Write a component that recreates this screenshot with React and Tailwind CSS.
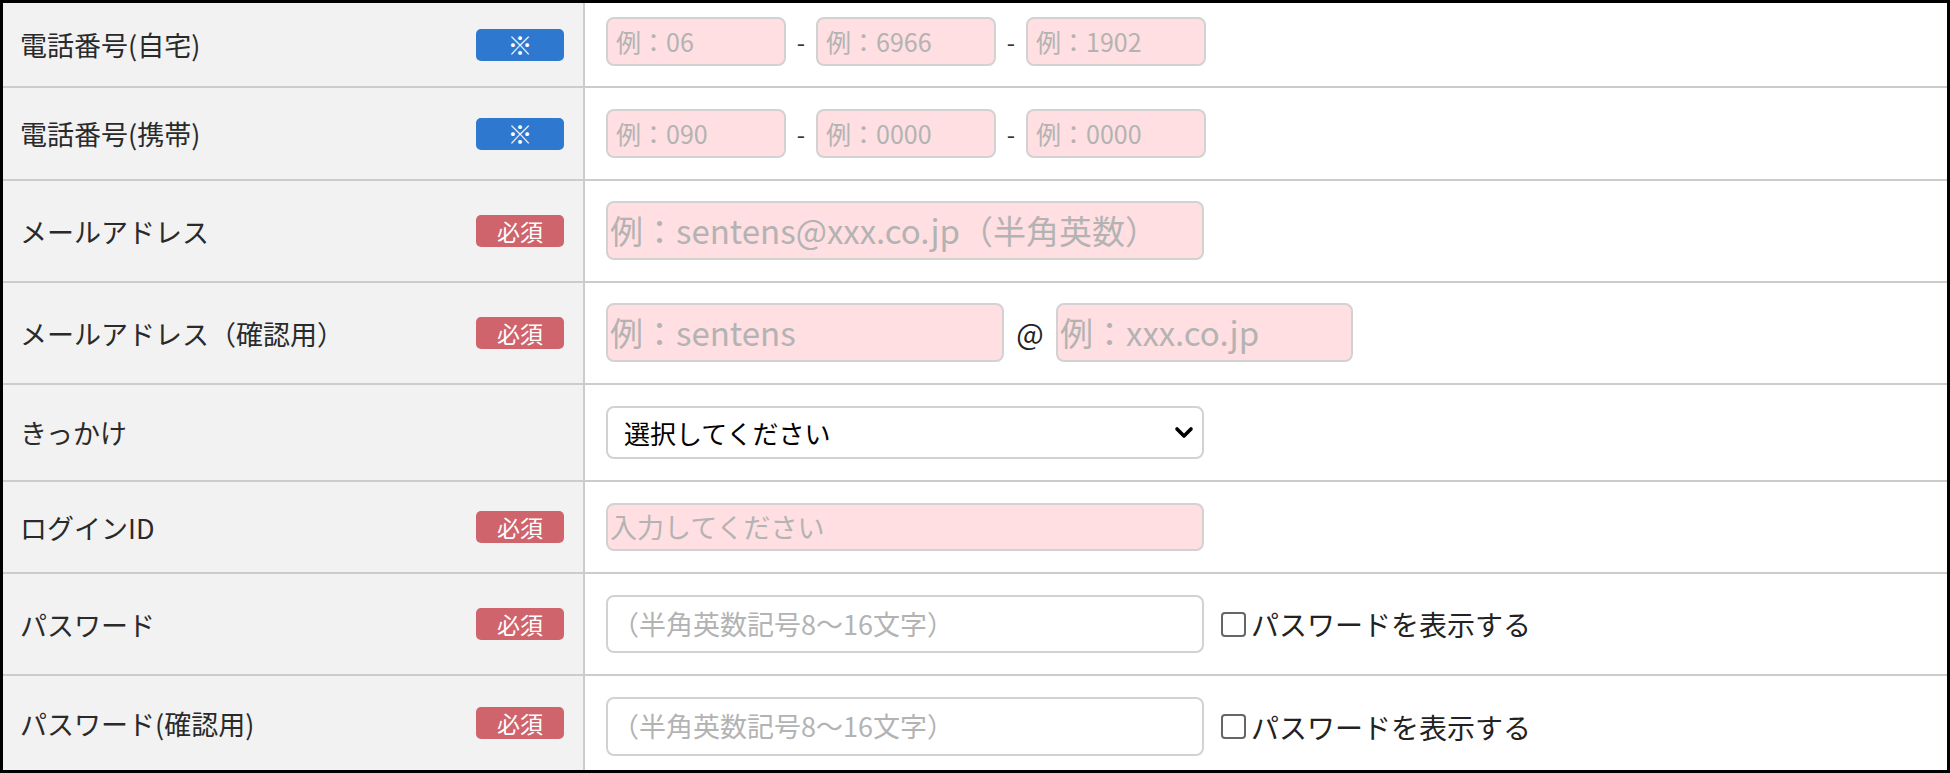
import React from "react";

const font = { fontFamily: '"Noto Sans CJK JP", "Noto Sans", sans-serif' };

const Badge = ({ type }) =>
  type === "req" ? (
    <span className="flex h-[32px] w-[88px] items-center justify-center rounded-[5px] bg-[#cf646c] text-[23px] leading-none text-white">
      必須
    </span>
  ) : (
    <span className="flex h-[32px] w-[88px] items-center justify-center rounded-[5px] bg-[#2f78d0] text-[25px] leading-none text-white">
      ※
    </span>
  );

const Row = ({ label, badge, last, pad = "pt-[20px] pb-[21px]", children }) => (
  <div className={`flex ${last ? "" : "border-b-2 border-[#cccccc]"}`}>
    <div className="flex w-[582px] shrink-0 items-center justify-between border-r-2 border-[#cccccc] bg-[#f2f2f2] pl-[17px] pr-[19px]">
      <span className="text-[27px] leading-none text-[#2a2a2a]">{label}</span>
      {badge && <Badge type={badge} />}
    </div>
    <div className={`flex flex-1 items-center bg-white pl-[21px] ${pad}`}>{children}</div>
  </div>
);

const pink =
  "rounded-[8px] border-2 border-[#d2d2d2] bg-[#ffdfe1] text-[#b3b3b3] outline-none";

const TelInput = ({ ph }) => (
  <div className={`${pink} flex h-[49px] w-[180px] items-center px-[8px] text-[25px]`}>{ph}</div>
);

const Dash = () => <span className="w-[30px] text-center text-[24px] text-[#333]">-</span>;

const Check = () => (
  <label className="ml-[17px] flex items-center">
    <span className="h-[25px] w-[25px] rounded-[4px] border-2 border-[#666666] bg-white" />
    <span className="ml-[5px] text-[28px] leading-none text-[#222]">パスワードを表示する</span>
  </label>
);

export default function App() {
  return (
    <div style={font} className="h-[773px] w-[1950px] overflow-hidden border-[3px] border-black bg-white">
      <Row label="電話番号(自宅)" badge="tel" pad="pt-[14px] pb-[20px]">
        <TelInput ph="例：06" />
        <Dash />
        <TelInput ph="例：6966" />
        <Dash />
        <TelInput ph="例：1902" />
      </Row>
      <Row label="電話番号(携帯)" badge="tel" pad="pt-[21px] pb-[21px]">
        <TelInput ph="例：090" />
        <Dash />
        <TelInput ph="例：0000" />
        <Dash />
        <TelInput ph="例：0000" />
      </Row>
      <Row label="メールアドレス" badge="req">
        <div className={`${pink} flex h-[59px] w-[598px] items-center px-[2px] text-[33px]`}>
          例：sentens@xxx.co.jp（半角英数）
        </div>
      </Row>
      <Row label="メールアドレス（確認用）" badge="req">
        <div className={`${pink} flex h-[59px] w-[398px] items-center px-[2px] text-[33px]`}>例：sentens</div>
        <span className="w-[52px] text-center text-[29px] text-[#222]">@</span>
        <div className={`${pink} flex h-[59px] w-[297px] items-center px-[2px] text-[33px]`}>例：xxx.co.jp</div>
      </Row>
      <Row label="きっかけ" pad="py-[21px]">
        <div className="flex h-[53px] w-[598px] items-center justify-between rounded-[8px] border-2 border-[#d2d2d2] bg-white pl-[16px] pr-[8px]">
          <span className="text-[26px] leading-none text-black">選択してください</span>
          <svg width="20" height="14" viewBox="0 0 20 14">
            <path d="M3 3 L10 10 L17 3" fill="none" stroke="#000" strokeWidth="3.6" strokeLinecap="round" strokeLinejoin="round" />
          </svg>
        </div>
      </Row>
      <Row label="ログインID" badge="req" pad="py-[21px]">
        <div className={`${pink} flex h-[48px] w-[598px] items-center px-[2px] text-[27px]`}>入力してください</div>
      </Row>
      <Row label="パスワード" badge="req" pad="py-[21px]">
        <div className="flex h-[58px] w-[598px] items-center rounded-[8px] border-2 border-[#d2d2d2] bg-white px-[4px] text-[27px] text-[#b3b3b3]">
          （半角英数記号8〜16文字）
        </div>
        <Check />
      </Row>
      <Row label="パスワード(確認用)" badge="req" last pad="pt-[21px] pb-[14px]">
        <div className="flex h-[59px] w-[598px] items-center rounded-[8px] border-2 border-[#d2d2d2] bg-white px-[4px] text-[27px] text-[#b3b3b3]">
          （半角英数記号8〜16文字）
        </div>
        <Check />
      </Row>
    </div>
  );
}
